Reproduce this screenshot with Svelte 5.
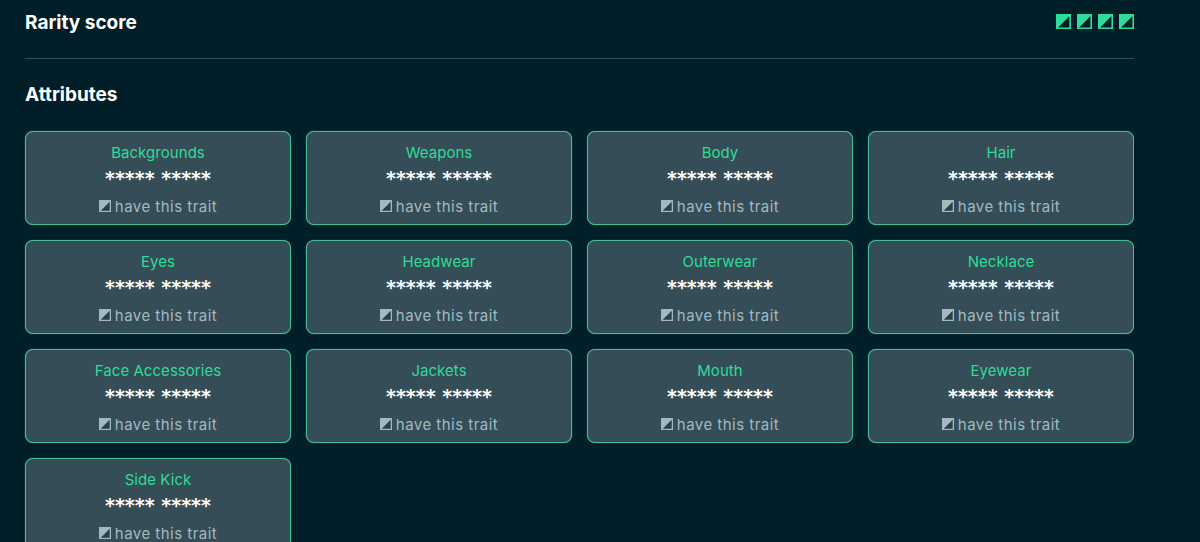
<script>
	const traits = [
		'Backgrounds', 'Weapons', 'Body', 'Hair',
		'Eyes', 'Headwear', 'Outerwear', 'Necklace',
		'Face Accessories', 'Jackets', 'Mouth', 'Eyewear',
		'Side Kick'
	];
</script>

{#snippet glyph(cls)}
	<svg class={cls} viewBox="0 0 14 14" aria-hidden="true">
		<rect class="glyph-bg" width="14" height="14" />
		<path class="glyph-cut" d="M12.5 2v10.5H2z" />
	</svg>
{/snippet}

<main class="panel">
	<header class="score">
		<h2>Rarity score</h2>
		<div class="score__icons">
			{#each [0, 1, 2, 3] as i (i)}
				{@render glyph('glyph glyph--score')}
			{/each}
		</div>
	</header>

	<hr />

	<h2 class="attrs">Attributes</h2>

	<div class="grid">
		{#each traits as trait (trait)}
			<article class="card">
				<div class="card__name">{trait}</div>
				<div class="card__value">***** *****</div>
				<div class="card__note">
					{@render glyph('glyph glyph--note')}
					<span>have this trait</span>
				</div>
			</article>
		{/each}
	</div>
</main>

<style>
	:global(body) {
		margin: 0;
		background: #001f28;
		overflow: hidden;
	}

	.panel {
		box-sizing: border-box;
		width: 1134px;
		height: 542px;
		overflow: hidden;
		padding: 12px 0 0 25px;
		font-family: Inter, 'Liberation Sans', sans-serif;
	}

	h2 {
		margin: 0;
		color: #fff;
		font-size: 19px;
		font-weight: 700;
		line-height: 22px;
	}

	.score {
		display: flex;
		align-items: center;
		justify-content: space-between;
	}

	.score__icons {
		display: flex;
		gap: 6px;
		margin-bottom: 4px;
	}

	hr {
		height: 1px;
		margin: 24px 0 0;
		border: 0;
		background: #2f4f55;
	}

	.attrs {
		margin-top: 25px;
	}

	.grid {
		display: grid;
		grid-template-columns: repeat(4, 266px);
		gap: 15px;
		margin-top: 25px;
	}

	.card {
		box-sizing: border-box;
		height: 94px;
		padding: 11px 0 0;
		border: 1px solid #45c096;
		border-radius: 8px;
		background: #344d56;
		box-shadow: 0 0 1px #45c096;
		text-align: center;
	}

	.card__name {
		color: #2fdc9a;
		font-size: 15px;
		letter-spacing: 0.05px;
		line-height: 20px;
	}

	.card__value {
		margin-top: 5px;
		color: #fff;
		font-family: 'DejaVu Sans', sans-serif;
		font-size: 19px;
		font-weight: 700;
		line-height: 21px;
	}

	.card__note {
		display: flex;
		align-items: center;
		justify-content: center;
		gap: 4px;
		margin-top: 8px;
		color: #a3b9c1;
		font-size: 15px;
		letter-spacing: 0.47px;
		line-height: 20px;
	}

	.glyph {
		display: block;
	}

	.glyph--score {
		width: 15px;
		height: 15px;
	}

	.glyph--score .glyph-bg {
		fill: #2fdc9a;
	}

	.glyph--score .glyph-cut {
		fill: #001f28;
	}

	.glyph--note {
		width: 12px;
		height: 12px;
		margin-top: -3px;
	}

	.glyph--note .glyph-bg {
		fill: #a3b9c1;
	}

	.glyph--note .glyph-cut {
		fill: #2b3f48;
	}
</style>
